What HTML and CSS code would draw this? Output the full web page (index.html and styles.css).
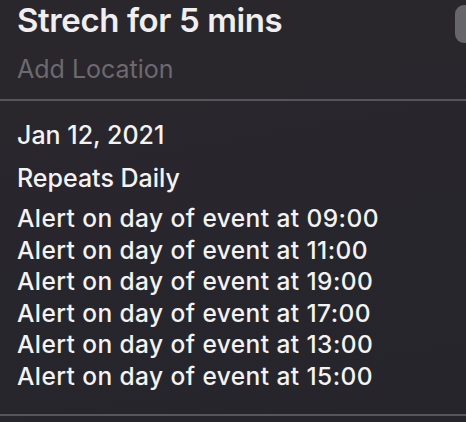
FILE: index.html
```html
<!DOCTYPE html>
<html>
<head>
<meta charset="utf-8">
<link rel="stylesheet" href="styles.css">
</head>
<body>
<div class="panel">
  <header class="head">
    <div class="head-row">
      <div class="title">Strech for 5 mins</div>
      <div class="side-btn"></div>
    </div>
    <div class="location">Add Location</div>
  </header>
  <div class="sep"></div>
  <section class="details">
    <div class="date">Jan 12, 2021</div>
    <div class="repeat">Repeats Daily</div>
    <ul class="alerts">
      <li>Alert on day of event at 09:00</li>
      <li>Alert on day of event at 11:00</li>
      <li>Alert on day of event at 19:00</li>
      <li>Alert on day of event at 17:00</li>
      <li>Alert on day of event at 13:00</li>
      <li>Alert on day of event at 15:00</li>
    </ul>
  </section>
  <div class="sep"></div>
</div>
</body>
</html>
```
FILE: styles.css
```css
html, body {
  margin: 0;
  padding: 0;
  height: 100%;
}
body {
  background: linear-gradient(170deg, #2a272c 0%, #28262c 50%, #26252c 100%);
  font-family: Inter, "Noto Sans", "Liberation Sans", sans-serif;
  color: #f1f0f2;
  overflow: hidden;
}
.panel {
  display: flex;
  flex-direction: column;
}
.head {
  padding-left: 17px;
}
.head-row {
  display: flex;
  justify-content: space-between;
  align-items: flex-start;
}
.title {
  font-size: 33px;
  font-weight: 600;
  line-height: 40px;
  letter-spacing: -0.4px;
  color: #efeef0;
}
.side-btn {
  width: 11px;
  height: 38px;
  margin-top: 5px;
  background: #66656a;
  border-radius: 9px 0 0 9px;
}
.location {
  margin-top: 11px;
  font-size: 25px;
  line-height: 30px;
  color: #6c6a70;
}
.sep {
  height: 2px;
  background: #57555b;
  margin-top: 15px;
}
.details {
  padding: 18px 0 0 17px;
}
.date, .repeat {
  font-size: 25px;
  font-weight: 500;
  line-height: 32px;
  color: #f3f3f4;
}
.repeat {
  margin-top: 11px;
}
.alerts {
  list-style: none;
  margin: 9px 0 0;
  padding: 0;
}
.alerts li {
  font-size: 24.5px;
  font-weight: 500;
  line-height: 31.6px;
  letter-spacing: 0.42px;
  color: #f3f3f4;
}
.details + .sep {
  margin-top: 21px;
}
```
